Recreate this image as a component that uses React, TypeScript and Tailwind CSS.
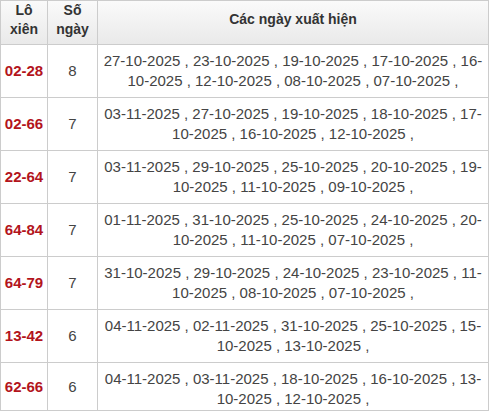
const rows: { pair: string; count: number; dates: string[]; h?: string }[] = [
	{ pair: "02-28", count: 8, dates: ["27-10-2025", "23-10-2025", "19-10-2025", "17-10-2025", "16-10-2025", "12-10-2025", "08-10-2025", "07-10-2025"] },
	{ pair: "02-66", count: 7, dates: ["03-11-2025", "27-10-2025", "19-10-2025", "18-10-2025", "17-10-2025", "16-10-2025", "12-10-2025"] },
	{ pair: "22-64", count: 7, dates: ["03-11-2025", "29-10-2025", "25-10-2025", "20-10-2025", "19-10-2025", "11-10-2025", "09-10-2025"] },
	{ pair: "64-84", count: 7, dates: ["01-11-2025", "31-10-2025", "25-10-2025", "24-10-2025", "20-10-2025", "11-10-2025", "07-10-2025"] },
	{ pair: "64-79", count: 7, dates: ["31-10-2025", "29-10-2025", "24-10-2025", "23-10-2025", "11-10-2025", "08-10-2025", "07-10-2025"] },
	{ pair: "13-42", count: 6, dates: ["04-11-2025", "02-11-2025", "31-10-2025", "25-10-2025", "15-10-2025", "13-10-2025"] },
	{ pair: "62-66", count: 6, dates: ["04-11-2025", "03-11-2025", "18-10-2025", "16-10-2025", "13-10-2025", "12-10-2025"] },
];

export default function App() {
	return (
		<div className="bg-white w-[490px] h-[412px] overflow-hidden font-['Liberation_Sans',Arial,sans-serif]">
			<div className="w-[489px] border-l border-t border-[#cccccc]">
				{/* header */}
				<div className="grid grid-cols-[47px_50px_391px] bg-gradient-to-b from-[#fafafa] to-[#e9e9e9] text-[14px] leading-[19px] font-bold text-[#333]">
					<div className="h-[44px] border-r border-b border-[#cccccc] flex items-center justify-center text-center pb-[6px]">
						Lô
						<br />
						xiên
					</div>
					<div className="h-[44px] border-r border-b border-[#cccccc] flex items-center justify-center text-center pb-[6px]">
						Số
						<br />
						ngày
					</div>
					<div className="h-[44px] border-r border-b border-[#cccccc] flex items-center justify-center pb-[6px]">
						Các ngày xuất hiện
					</div>
				</div>

				{rows.map((r, i) => {
					const h = i === rows.length - 1 ? "h-[48px]" : "h-[53px]";
					return (
						<div key={r.pair} className="grid grid-cols-[47px_50px_391px] text-[15px] leading-[20px] text-[#444]">
							<div className={`${h} border-r border-b border-[#cccccc] flex items-center justify-center font-bold text-[#b3141c]`}>
								{r.pair}
							</div>
							<div className={`${h} border-r border-b border-[#cccccc] flex items-center justify-center`}>
								{r.count}
							</div>
							<div className={`${h} border-r border-b border-[#cccccc] overflow-hidden px-[5px] pt-[6px] text-center`}>
								{r.dates.map((d) => d + " , ").join("")}
							</div>
						</div>
					);
				})}
			</div>
		</div>
	);
}
